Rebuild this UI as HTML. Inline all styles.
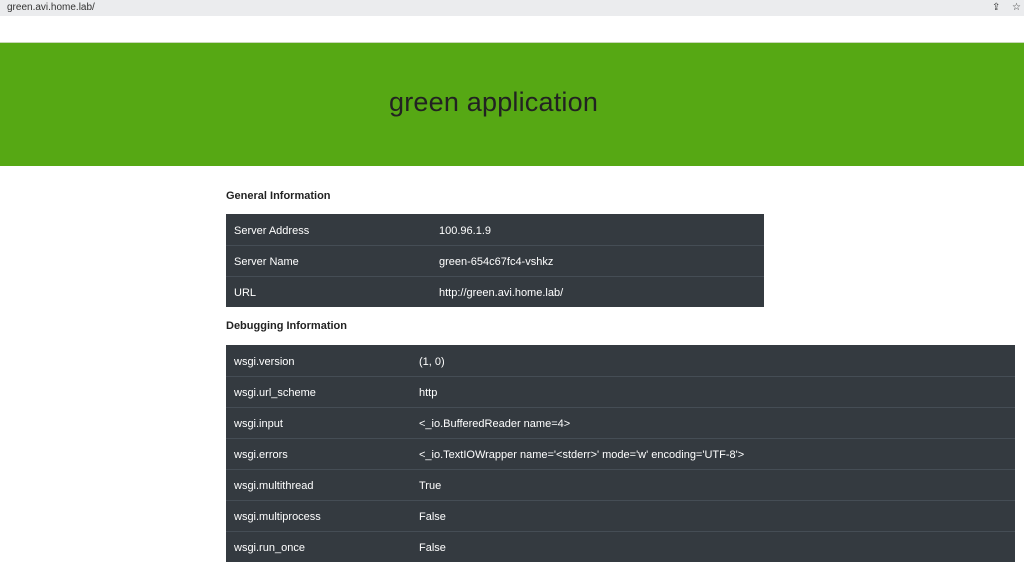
<!DOCTYPE html>
<html><head><style>
body{margin:0;width:1024px;height:559px;overflow:hidden;background:#fff;font-family:"Liberation Sans",sans-serif;position:relative}
.bar{position:absolute;left:0;top:0;width:1024px;height:16px;background:#ebecee;font-size:10px;color:#333}
.bar span{position:absolute;left:7px;top:2px}
.hero{position:absolute;left:0;top:42px;width:1024px;height:123px;background:#56a814;border-top:1px solid #c8d8b8}
.hero h1{position:absolute;left:389px;top:44px;margin:0;font-size:27px;font-weight:normal;color:#222;letter-spacing:0.2px}
h5{position:absolute;left:226px;margin:0;font-size:11px;font-weight:bold;color:#222}
table{position:absolute;left:226px;border-collapse:collapse;background:#343a40;color:#fff;font-size:11px;table-layout:fixed}
td{height:31px;border-top:1px solid #454d55;padding:3px 0 0 8px;box-sizing:border-box;vertical-align:middle}
tr:first-child td{border-top:none}
</style></head><body>
<div class="bar"><span>green.avi.home.lab/</span><span style="left:992px">⇪</span><span style="left:1012px">☆</span></div>
<div class="hero"><h1>green application</h1></div>
<h5 style="top:190px">General Information</h5>
<table style="top:214px;width:538px">
<tr><td style="width:205px">Server Address</td><td>100.96.1.9</td></tr>
<tr><td>Server Name</td><td>green-654c67fc4-vshkz</td></tr>
<tr><td>URL</td><td>http://green.avi.home.lab/</td></tr>
</table>
<h5 style="top:320px">Debugging Information</h5>
<table style="top:345px;width:789px">
<tr><td style="width:185px">wsgi.version</td><td>(1, 0)</td></tr>
<tr><td>wsgi.url_scheme</td><td>http</td></tr>
<tr><td>wsgi.input</td><td>&lt;_io.BufferedReader name=4&gt;</td></tr>
<tr><td>wsgi.errors</td><td>&lt;_io.TextIOWrapper name='&lt;stderr&gt;' mode='w' encoding='UTF-8'&gt;</td></tr>
<tr><td>wsgi.multithread</td><td>True</td></tr>
<tr><td>wsgi.multiprocess</td><td>False</td></tr>
<tr><td>wsgi.run_once</td><td>False</td></tr>
</table>
</body></html>
